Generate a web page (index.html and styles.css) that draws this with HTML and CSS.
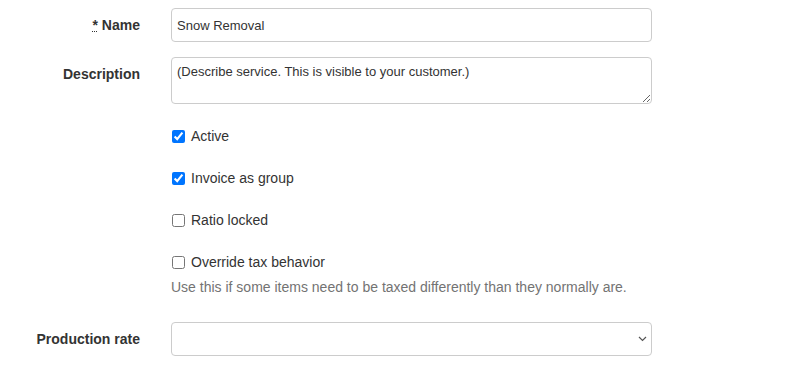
FILE: index.html
```html
<!DOCTYPE html>
<html>
<head>
<meta charset="utf-8">
<link rel="stylesheet" href="styles.css">
</head>
<body>
<form class="form">
  <div class="group">
    <label class="lbl"><abbr title="required">*</abbr> Name</label>
    <div class="field"><input class="ctl" type="text" value="Snow Removal"></div>
  </div>
  <div class="group">
    <label class="lbl">Description</label>
    <div class="field"><textarea class="ctl area">(Describe service. This is visible to your customer.)</textarea></div>
  </div>
  <div class="group">
    <div class="lbl"></div>
    <div class="field"><label class="check"><input type="checkbox" checked> Active</label></div>
  </div>
  <div class="group">
    <div class="lbl"></div>
    <div class="field"><label class="check"><input type="checkbox" checked> Invoice as group</label></div>
  </div>
  <div class="group">
    <div class="lbl"></div>
    <div class="field"><label class="check"><input type="checkbox"> Ratio locked</label></div>
  </div>
  <div class="group">
    <div class="lbl"></div>
    <div class="field">
      <label class="check"><input type="checkbox"> Override tax behavior</label>
      <p class="help">Use this if some items need to be taxed differently than they normally are.</p>
    </div>
  </div>
  <div class="group">
    <label class="lbl">Production rate</label>
    <div class="field">
      <div class="selwrap">
        <select class="ctl sel"><option></option></select>
        <svg class="chev" width="9" height="6" viewBox="0 0 9 6"><path d="M1 1l3.5 3.5L8 1" fill="none" stroke="#555" stroke-width="1.2"/></svg>
      </div>
    </div>
  </div>
</form>
</body>
</html>
```
FILE: styles.css
```css
html, body {
  margin: 0;
  padding: 0;
  background: #fff;
}
body {
  font-family: "Liberation Sans", Arial, sans-serif;
  font-size: 14px;
  line-height: 20px;
  color: #333;
}
.form {
  padding-top: 8px;
}
.group {
  display: flex;
  gap: 31px;
  margin-bottom: 15px;
}
.lbl {
  width: 140px;
  flex: none;
  text-align: right;
  font-weight: bold;
  padding-top: 7px;
  box-sizing: border-box;
}
.lbl abbr {
  text-decoration: underline dotted;
  text-decoration-thickness: 1px;
  cursor: help;
}
.field {
  width: 481px;
  flex: none;
}
.ctl {
  display: block;
  width: 481px;
  height: 34px;
  box-sizing: border-box;
  border: 1px solid #ccc;
  border-radius: 4px;
  padding: 6px 5px;
  font-family: inherit;
  font-size: 13px;
  color: #333;
  background: #fff;
  margin: 0;
}
.area {
  height: 47px;
  padding: 5px 5px;
  line-height: 18px;
  resize: vertical;
}
.check {
  display: flex;
  align-items: center;
  padding-top: 7px;
  min-height: 20px;
  line-height: 20px;
  font-weight: normal;
}
.check input {
  margin: 0 6px 0 1px;
  width: 13px;
  height: 13px;
}
.help {
  margin: 5px 0 10px;
  color: #737373;
}
.selwrap {
  position: relative;
}
.sel {
  appearance: none;
  -webkit-appearance: none;
}
.chev {
  position: absolute;
  right: 5px;
  top: 14px;
}
```
